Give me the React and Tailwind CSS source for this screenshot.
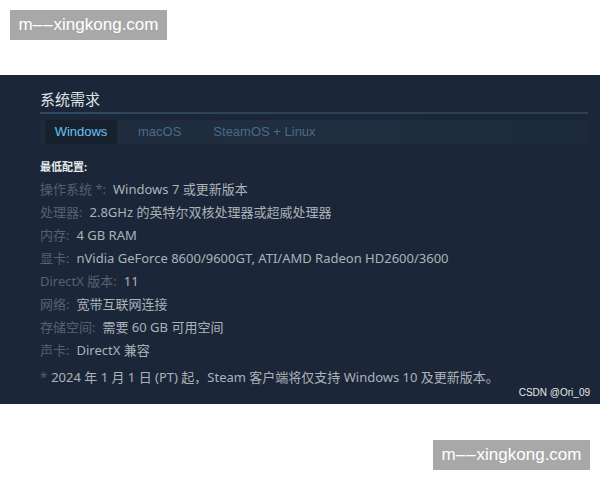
import React from 'react'

const specs = [
  ['操作系统 *:', 'Windows 7 或更新版本'],
  ['处理器:', '2.8GHz 的英特尔双核处理器或超威处理器'],
  ['内存:', '4 GB RAM'],
  ['显卡:', 'nVidia GeForce 8600/9600GT, ATI/AMD Radeon HD2600/3600'],
  ['DirectX 版本:', '11'],
  ['网络:', '宽带互联网连接'],
  ['存储空间:', '需要 60 GB 可用空间'],
  ['声卡:', 'DirectX 兼容'],
]

const Watermark = () => (
  <div className="w-[157px] h-[30px] bg-[#a8a8a8] text-white text-[17px] leading-[30px] text-center font-['Liberation_Sans','Noto_Sans',sans-serif]">
    m<span className="tracking-[1px]">––</span>xingkong.com
  </div>
)

const App = () => {
  return (
    <div className="w-[600px] h-[480px] bg-white flex flex-col font-['Noto_Sans','Noto_Sans_CJK_SC',sans-serif]">
      <div className="pt-[10px] pl-[10px]">
        <Watermark />
      </div>

      <div className="mt-[35px] h-[329px] bg-[#1b2738] px-[40px] pt-[14px] flex flex-col relative">
        <div className="text-[15px] leading-[20px] text-[#dfe3e6]">系统需求</div>
        <div className="mt-[3px] h-[2px] w-[548px] bg-gradient-to-r from-[#2f4a63] via-[#2b4156] to-[#2c3e50]" />
        <div className="mt-[6px] h-[24px] w-[548px] bg-gradient-to-r from-[#1e2a3a] via-[#202e40] to-[#1d2a3a] flex items-stretch pl-[5px] text-[13px] font-['Liberation_Sans',sans-serif]">
          <div className="w-[72px] bg-[#17212e] text-[#67c1f5] flex items-center justify-center">Windows</div>
          <div className="ml-[21px] text-[#4b6a88] flex items-center">macOS</div>
          <div className="ml-[32px] text-[#4b6a88] flex items-center">SteamOS + Linux</div>
        </div>

        <div className="mt-[11px] flex flex-col">
          <div className="h-[23px] leading-[23px] text-[11px] text-[#e8ebee] font-bold">最低配置:</div>
          {specs.map(([label, value]) => (
            <div key={label} className="h-[23px] leading-[23px] text-[13px] flex whitespace-nowrap">
              <span className="text-[#56616c]">{label}</span>
              <span className="ml-[7px] text-[#acb2b8]">{value}</span>
            </div>
          ))}
          <div className="mt-[4px] h-[23px] leading-[23px] text-[13px] flex whitespace-nowrap">
            <span className="text-[#56616c]">*</span>
            <span className="ml-[4px] text-[#acb2b8]">2024 年 1 月 1 日 (PT) 起，Steam 客户端将仅支持 Windows 10 及更新版本。</span>
          </div>
        </div>

        <div className="absolute right-[10px] bottom-[5px] text-[10px] leading-[12px] text-[#e6e8ea] font-['Liberation_Sans',sans-serif]">
          CSDN @Ori_09
        </div>
      </div>

      <div className="mt-[36px] flex justify-end pr-[10px]">
        <Watermark />
      </div>
    </div>
  )
}

export default App
